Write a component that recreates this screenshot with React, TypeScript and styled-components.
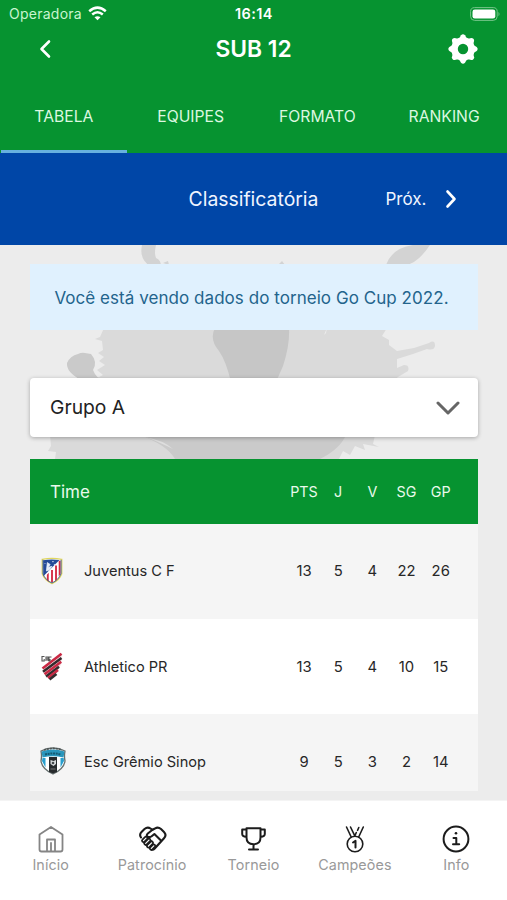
import React from 'react';
import styled, { createGlobalStyle } from 'styled-components';

const GlobalStyle = createGlobalStyle`
  * { box-sizing: border-box; }
  body { margin: 0; font-family: Inter, "Liberation Sans", sans-serif; background: #fff; }
  svg { display: block; }
`;

const Screen = styled.div`
  width: 507px;
  height: 900px;
  display: flex;
  flex-direction: column;
  overflow: hidden;
`;

const Label = styled.span<{ $size: number; $ls?: number; $weight?: number; $color?: string }>`
  font-size: ${p => p.$size}px;
  letter-spacing: ${p => p.$ls ?? 0}px;
  font-weight: ${p => p.$weight ?? 400};
  color: ${p => p.$color ?? 'inherit'};
  line-height: 1.2;
  white-space: nowrap;
`;

const Header = styled.header`
  height: 153px;
  flex: none;
  background: #069330;
  color: #fff;
  display: flex;
  flex-direction: column;
`;

const StatusBar = styled.div`
  height: 27px;
  display: grid;
  grid-template-columns: 1fr auto 1fr;
  align-items: center;
  padding: 1px 6px 0 9px;
`;

const Carrier = styled.div`
  display: flex;
  align-items: center;
  gap: 6px;
`;

const Clock = styled(Label)`
  margin-left: -2px;
`;

const BatterySlot = styled.div`
  justify-self: end;
`;

const TitleBar = styled.div`
  height: 44px;
  display: grid;
  grid-template-columns: 1fr auto 1fr;
  align-items: center;
  padding: 0 29px 0 39px;
`;

const TitleText = styled.h1`
  margin: 0 0 0 -10px;
  font-size: 22.8px;
  font-weight: 600;
  letter-spacing: 0;
  line-height: 28px;
`;

const SettingsSlot = styled.div`
  justify-self: end;
`;

const Tabs = styled.nav`
  flex: 1;
  display: grid;
  grid-template-columns: repeat(4, 1fr);
`;

const Tab = styled.div<{ $active?: boolean }>`
  display: flex;
  align-items: center;
  justify-content: center;
  padding-top: 14px;
  border-bottom: 3px solid ${p => (p.$active ? '#67b1df' : 'transparent')};
  margin-left: 1px;
`;

const Phase = styled.div`
  height: 92px;
  flex: none;
  background: #0046a7;
  color: #f0f5ff;
  display: grid;
  grid-template-columns: 1fr auto 1fr;
  align-items: center;
  padding-top: 1px;
`;

const NextPhase = styled.div`
  display: flex;
  align-items: center;
  gap: 19px;
  padding-left: 67px;
`;

const Content = styled.main`
  height: 555px;
  flex: none;
  background: #ececec;
  padding: 19px 29px 0 30px;
  position: relative;
  overflow: hidden;
`;

const Splash = styled.svg`
  position: absolute;
  left: 0;
  top: 0;
`;

const Stack = styled.div`
  position: relative;
  display: flex;
  flex-direction: column;
`;

const Notice = styled.div`
  height: 66px;
  background: #e0f1fe;
  color: #23648c;
  display: flex;
  align-items: center;
  justify-content: center;
  padding: 2px 5px 0 0;
`;

const Select = styled.div`
  margin-top: 48px;
  height: 59px;
  background: #fff;
  border-radius: 4px;
  box-shadow: 0 1px 4px rgba(0, 0, 0, 0.3);
  display: flex;
  align-items: center;
  justify-content: space-between;
  padding: 1px 18px 0 20px;
`;

const Table = styled.div`
  margin-top: 22px;
  height: 332px;
  overflow: hidden;
`;

const Row = styled.div<{ $shade?: boolean }>`
  height: 95.3px;
  background: ${p => (p.$shade ? '#f5f5f5' : '#fff')};
  color: #272727;
  display: grid;
  grid-template-columns: 54px 1fr repeat(5, 34.2px);
  align-items: center;
  padding: 2px 20.2px 0 0;
`;

const HeadRow = styled(Row)`
  height: 64.5px;
  background: #069330;
  color: #e9faec;
  grid-template-columns: 20px 1fr repeat(5, 34.2px);
  padding-top: 1px;
`;

const Cell = styled.div`
  display: flex;
  justify-content: center;
`;

const Badge = styled.div`
  padding-left: 10px;
  margin-top: -3px;
`;

const BottomNav = styled.nav`
  height: 100px;
  flex: none;
  background: #fff;
  border-top: 1px solid #f4f4f4;
  display: grid;
  grid-template-columns: repeat(5, 1fr);
  padding-top: 23px;
`;

const NavItem = styled.div`
  display: flex;
  flex-direction: column;
  align-items: center;
  gap: 2px;
`;

const Wifi = () => (
  <svg width="19" height="15" viewBox="0 0 19 15" fill="none" stroke="#fff" strokeWidth="2.5">
    <path d="M1.2 5.2Q9.5-2 17.8 5.2M4.2 8.5Q9.5 4 14.8 8.5" />
    <path d="M9.5 14.2L6.5 11.3Q9.5 9 12.5 11.3Z" fill="#fff" stroke="none" />
  </svg>
);

const Battery = () => (
  <svg width="31" height="14" viewBox="0 0 31 14">
    <rect x=".6" y=".6" width="26.6" height="12.8" rx="4" fill="none" stroke="#75c489" />
    <rect x="2.5" y="2.5" width="22.8" height="9" rx="2.3" fill="#fff" />
    <path d="M28.5 4.7q2 2.3 0 4.6z" fill="#75c489" />
  </svg>
);

const Gear = () => (
  <svg width="30" height="30" viewBox="0 0 30 30">
    <circle cx="15" cy="15" r="8.5" fill="none" stroke="#fff" strokeWidth="6.6" />
    {[0, 45, 90, 135, 180, 225, 270, 315].map(a => (
      <path key={a} d="M10.8 5L13 1.3Q15-.6 17 1.3L19.2 5z" fill="#fff" transform={`rotate(${a} 15 15)`} />
    ))}
  </svg>
);

const Chevron = ({ d, w, h, color = '#fff', sw = 2.6 }: { d: string; w: number; h: number; color?: string; sw?: number }) => (
  <svg width={w} height={h} viewBox={`0 0 ${w} ${h}`} fill="none" stroke={color} strokeWidth={sw} strokeLinecap="round" strokeLinejoin="round">
    <path d={d} />
  </svg>
);

const SplashArt = () => (
  <Splash width="507" height="555" viewBox="0 245 507 555">
    <path d="M142 245h14q-2 8 0 13 5 2 5 8l-11 0q-11-7-8-21zM386 265q6-17 27-20h17q-12 18-24 20zM278 265l4-4 3 4zM163 263l5-2 1 4z" fill="#d3d3d3" />
    <path d="M104 328L387 328l-5 8 7 4 0 5 8 6 17-3 15-5q6-4 6 3-1 5-8 3l-14 5-16 5 0 9 7-3q6 0 4 6l-10 6-11 10H107l-6-2-6-6 8-4-6-5 8-5-6-4 5-4-6-4 5-3-1-9-7-2 5-2z" fill="#dadada" />
    <path d="M324 335l3-7-1 5z" fill="#ededed" />
    <path d="M215 328h74q1 17-6 38l-7 16h-45q-5-21-12-31-10-12-4-23z" fill="#c6c6c6" />
    <path d="M67 363q3-7 11-9 4-2 7-1l6 1q7 8 2 16 3 8 10 10H81q-15-8-14-17z" fill="#cacaca" />
    <path d="M50 435H375l-2 9 6 3-16-3 2 6-10-4-5 9-7-4-4 8H55l1-7-8-1 3-5z" fill="#dadada" />
    <path d="M140 435H346q-6 14-26 24H175q-8-14-35-24z" fill="#cacaca" />
    <path d="M145 437q18 3 28 12-16-8-28-12z" fill="#dedede" />
  </Splash>
);

const Atletico = () => (
  <svg width="24" height="28" viewBox="0 0 24 30">
    <path d="M1.5 2.5Q12 .5 22.5 2.5V18Q20 25 12 28.5 4 25 1.5 18Z" fill="#fff" stroke="#e0d65e" strokeWidth="1.3" />
    <path d="M8.5 17v9.5l-2-1.5v-6zM11 14h2v13h-2zM15.3 9h2v15l-2 2zM19.2 4h2v14l-2 3z" fill="#d42c43" />
    <path d="M2.5 3.5Q11 2 20 3.3L2.7 20.5z" fill="#244b98" />
    <path d="M6 15l1-9 3 2-2 3 4-1-3 4zM12 5h2M14 8h1.3M4 7h1" fill="#e6edf8" stroke="#e6edf8" strokeWidth=".8" />
    <path d="M2.3 3V18Q5 25 12 27.8q7-3 9.7-10V3" fill="none" stroke="#31538d" strokeWidth=".9" />
  </svg>
);

const Athletico = () => (
  <svg width="25" height="30" viewBox="0 0 25 30">
    <path d="M21.5 2v10.5l-4.5 9L8.500 27 2 20 14 10.500z" fill="#f3dfe2" />
    <g strokeWidth="2.6">
      <path d="M2.500 17.500L21.500 2.700" stroke="#c92944" />
      <path d="M3 20.700L21.500 7" stroke="#332a2d" />
      <path d="M4.500 23.200L21.200 10.800" stroke="#c92944" />
      <path d="M6 25.500L19 15.800" stroke="#332a2d" />
      <path d="M8 27L18 19" stroke="#c92944" />
      <path d="M9.500 28.500L16.500 23" stroke="#332a2d" />
    </g>
    <path d="M4.500 5.500H2v4.500h2.200V8M6 10V6h2v4M6 8h2M11.500 6H9v4h1V8" fill="none" stroke="#555" strokeWidth="1.1" />
  </svg>
);

const Sinop = () => (
  <svg width="26" height="30" viewBox="0 0 26 30">
    <path d="M1 5Q13-1 25 5q-1 5 0 10-1 8-12 13Q2 23 1 15q1-5 0-10z" fill="#fff" stroke="#65706f" strokeWidth="1.3" />
    <path d="M2.5 12h3v9.5L2 15zM20.5 12h3.2l.3 3-3.5 6.5z" fill="#289fce" />
    <path d="M9 11h8v15l-4 1.5-4-1.5z" fill="#272b2d" />
    <path d="M1.5 5.5Q13 1.5 24.5 5.5l-1 6Q13 9 2.5 11.5z" fill="#2996bc" />
    <path d="M4 4Q13 .8 22 4" stroke="#4f5555" strokeWidth="1.6" strokeDasharray="2 1" fill="none" />
    <path d="M5 8.5Q13 6.5 21 8.5" stroke="#155a72" strokeWidth="2" strokeDasharray="2 .7" fill="none" />
    <path d="M10.5 14l3 1 2.5-1v4l-2.5 2-3-2z" fill="#d9dcdd" />
    <circle cx="13" cy="17" r="1.3" fill="#44494b" />
    <path d="M10.5 23h5" stroke="#777" />
  </svg>
);

const NavIcon = ({ children, color = '#1c1c1c' }: { children: React.ReactNode; color?: string }) => (
  <svg width="30" height="30" viewBox="0 0 30 30" fill="none" stroke={color} strokeWidth="1.8" strokeLinecap="round" strokeLinejoin="round">
    {children}
  </svg>
);

const fingers = 'M6.5 16.7L9 14.2M8.7 19.4L12 16.1M11.4 22L14.6 18.8M14.3 24.4L16.8 21.9';

const navItems = [
  {
    label: 'Início',
    icon: <NavIcon color="#858585"><path d="M3.5 10.5L15 3l11.5 7.5v15q0 2-2 2h-19q-2 0-2-2zM11 27.3V15.500h8v11.800M15 19v8" /></NavIcon>,
  },
  {
    label: 'Patrocínio',
    icon: (
      <NavIcon>
        <path d="M4 13.5q-2-3 .5-5.5l3-3q3-2.5 6-.5l2 1.3 2.5-1.3q3-2 6 .5l3 3q3 3 0 6.2L17.5 24.8q-1.5 1.5-3 .5" strokeWidth="2.1" />
        <path d="M15.5 5.8l-5 4q-1.6 2 .3 3 2 1 4.2-.8l2.4-2 6.8 6.7" strokeWidth="2.1" />
        <path d={fingers} strokeWidth="4.7" />
        <path d={fingers} stroke="#fff" strokeWidth="1.2" />
      </NavIcon>
    ),
  },
  {
    label: 'Torneio',
    icon: <NavIcon><path d="M8.5 4.2h14v9.3q0 6.7-7 6.7t-7-6.7zM15.5 20.2v5M11 25.5h9M8.5 5.5h-4.3v4.5q0 2.5 4.3 3M22.5 5.5h4.3v4.5q0 2.5-4.3 3" strokeWidth="2" /></NavIcon>,
  },
  {
    label: 'Campeões',
    icon: (
      <NavIcon>
        <g strokeWidth="1.6">
          <path d="M6.5 3L11.2 13M10.5 3l4.2 8.7M23.3 3L18.7 13M18.8 3.5l-1.2 2.8M16.3 8.5l-1.3 3" />
          <circle cx="15" cy="20" r="7.8" />
          <path d="M13 18.5l2.5-1.7V23.5" strokeWidth="2" />
        </g>
      </NavIcon>
    ),
  },
  {
    label: 'Info',
    icon: (
      <NavIcon>
        <circle cx="15" cy="15" r="12.4" strokeWidth="2" />
        <path d="M12.5 14h2.8v6M12 20.2h6.2" strokeWidth="2" />
        <circle cx="15" cy="9.2" r="1.3" fill="#1c1c1c" stroke="none" />
      </NavIcon>
    ),
  },
];

const teams = [
  { name: 'Juventus C F', badge: <Atletico />, stats: [13, 5, 4, 22, 26] },
  { name: 'Athletico PR', badge: <Athletico />, stats: [13, 5, 4, 10, 15] },
  { name: 'Esc Grêmio Sinop', badge: <Sinop />, stats: [9, 5, 3, 2, 14] },
];

export default function App() {
  return (
    <Screen>
      <GlobalStyle />
      <Header>
        <StatusBar>
          <Carrier><Label $size={14} $ls={0.25} $color="#c9f5d0">Operadora</Label><Wifi /></Carrier>
          <Clock $size={14.5} $ls={0.4} $weight={600}>16:14</Clock>
          <BatterySlot><Battery /></BatterySlot>
        </StatusBar>
        <TitleBar>
          <Chevron w={13} h={20} d="M10 2.5L2.5 10l7.5 7.5" />
          <TitleText>SUB 12</TitleText>
          <SettingsSlot><Gear /></SettingsSlot>
        </TitleBar>
        <Tabs>
          {['TABELA', 'EQUIPES', 'FORMATO', 'RANKING'].map((t, i) => (
            <Tab key={t} $active={i === 0}><Label $size={15.7} $color="#dcf8e0">{t}</Label></Tab>
          ))}
        </Tabs>
      </Header>
      <Phase>
        <span />
        <Label $size={19.4}>Classificatória</Label>
        <NextPhase>
          <Label $size={17}>Próx.</Label>
          <Chevron w={12} h={20} d="M2.5 2.5L9.5 10l-7 7.5" />
        </NextPhase>
      </Phase>
      <Content>
        <SplashArt />
        <Stack>
          <Notice><Label $size={17} $ls={0.05}>Você está vendo dados do torneio Go Cup 2022.</Label></Notice>
          <Select>
            <Label $size={19.3} $color="#222">Grupo A</Label>
            <Chevron w={24} h={16} d="M2 3l10 10L22 3" color="#666" sw={3} />
          </Select>
          <Table>
            <HeadRow>
              <span />
              <Label $size={17}>Time</Label>
              {['PTS', 'J', 'V', 'SG', 'GP'].map(h => <Cell key={h}><Label $size={14.3}>{h}</Label></Cell>)}
            </HeadRow>
            {teams.map((t, i) => (
              <Row key={t.name} $shade={i % 2 === 0}>
                <Badge>{t.badge}</Badge>
                <Label $size={14.6}>{t.name}</Label>
                {t.stats.map((s, j) => <Cell key={j}><Label $size={14.8}>{s}</Label></Cell>)}
              </Row>
            ))}
          </Table>
        </Stack>
      </Content>
      <BottomNav>
        {navItems.map(n => (
          <NavItem key={n.label}>{n.icon}<Label $size={14.3} $ls={0.1} $color="#999">{n.label}</Label></NavItem>
        ))}
      </BottomNav>
    </Screen>
  );
}
